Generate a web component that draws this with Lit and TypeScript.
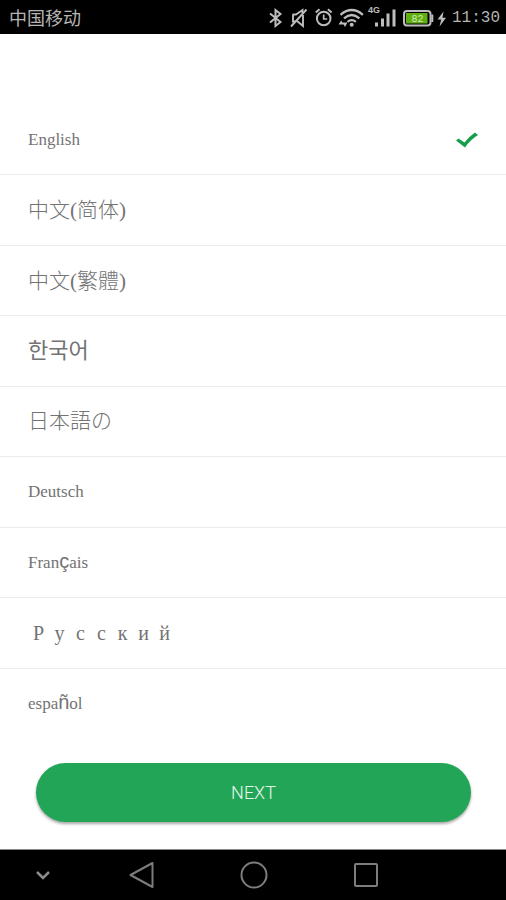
import { LitElement, html, css, svg, nothing } from "lit";
import { customElement, state } from "lit/decorators.js";

interface Language {
  code: string;
  style: "latin" | "cjk" | "hangul" | "wide";
  // Name split into runs; accented letters fall back to the sans face.
  runs: { text: string; fallback?: boolean }[];
}

const LANGUAGES: Language[] = [
  { code: "en", style: "latin", runs: [{ text: "English" }] },
  { code: "zh-Hans", style: "cjk", runs: [{ text: "中文(简体)" }] },
  { code: "zh-Hant", style: "cjk", runs: [{ text: "中文(繁體)" }] },
  { code: "ko", style: "hangul", runs: [{ text: "한국어" }] },
  { code: "ja", style: "cjk", runs: [{ text: "日本語の" }] },
  { code: "de", style: "latin", runs: [{ text: "Deutsch" }] },
  { code: "fr", style: "latin", runs: [{ text: "Fran" }, { text: "ç", fallback: true }, { text: "ais" }] },
  { code: "ru", style: "wide", runs: [..."Русский"].map((text) => ({ text })) },
  { code: "es", style: "latin", runs: [{ text: "espa" }, { text: "ñ", fallback: true }, { text: "ol" }] },
];

@customElement("status-bar")
export class StatusBar extends LitElement {
  static styles = css`
    :host {
      display: flex;
      align-items: center;
      gap: 5px;
      height: 34px;
      padding: 0 6px 0 9px;
      background: #000;
      color: #b4b4b4;
      box-sizing: border-box;
    }
    .carrier {
      flex: 1;
      font: 18px/20px "Noto Sans CJK SC", sans-serif;
    }
    .time {
      font: 16px/20px "Liberation Mono", monospace;
      padding-top: 2px;
    }
    svg {
      display: block;
      flex: none;
      overflow: visible;
      fill: none;
      stroke: #bdbdbd;
      stroke-width: 2;
    }
    .solid {
      fill: #bdbdbd;
      stroke: none;
    }
    .charge {
      fill: #5fae12;
      stroke: none;
    }
    .network {
      font: bold 9px "Liberation Sans", sans-serif;
      fill: #bdbdbd;
      stroke: none;
    }
    .level {
      font: 10px "Liberation Mono", monospace;
      fill: #d5e8b8;
      stroke: none;
      text-anchor: middle;
    }
  `;

  private icon(width: number, content: unknown) {
    return html`<svg width=${width} height="24" viewBox="0 0 ${width} 24" aria-hidden="true">${content}</svg>`;
  }

  render() {
    return html`
      <span class="carrier">中国移动</span>
      ${this.icon(16, svg`<path d="M2 8.500 12.500 17 7.500 21V5l5 4L2 17.500"/>`)}
      ${this.icon(19, svg`
        <path d="M3.500 9.500h3.500L13.500 5v3M14 10v11l-6-5M4 9.500v7h2" stroke-width="1.900"/>
        <path d="M2 21.500 17.500 4.500" stroke-width="1.900"/>`)}
      ${this.icon(21, svg`
        <circle cx="10.700" cy="13.500" r="6.800"/>
        <path d="M10.700 9.500v4.500h3.500" stroke-width="1.700"/>
        <path d="M2.800 7.500 6.500 4.300M18.600 7.500 14.900 4.300"/>`)}
      ${this.icon(25, svg`
        <path d="M1.500 9.800q11.200-9.600 22.400 0M5 13.300q7.700-6.600 15.400 0M8.500 16.800q4.200-3.400 8.400 0" stroke-width="2.200"/>
        <circle class="solid" cx="12.700" cy="19.800" r="2"/>
        <path class="solid" d="M-.5 19.500 2.200 15.500 4.700 19.500zM3.500 17.500h5L6 22z"/>`)}
      ${this.icon(29, svg`
        <text class="network" x="-1" y="8">4G</text>
        <path class="solid" d="M6 17.500h3v4H6zM12 13.500h3v8h-3zM17.500 8.500h3v13h-3zM23.500 4.500h3v17h-3z"/>`)}
      ${this.icon(31, svg`
        <rect x="1" y="6" width="26.500" height="14.500" rx="3"/>
        <path d="M29.300 9.500v7.500"/>
        <path class="charge" d="M3 8h21.500v10.500H3z"/>
        <text class="level" x="14.500" y="16.500">82</text>`)}
      ${this.icon(8, svg`<path class="solid" d="M4.500 6.500-1.500 14.500H2.200L.5 21.500 7 12.800H3.500z"/>`)}
      <span class="time">11:30</span>
    `;
  }
}

@customElement("nav-bar")
export class NavBar extends LitElement {
  static styles = css`
    :host {
      display: grid;
      grid-template-columns: 85fr 113fr 112fr 112fr 84fr;
      height: 51px;
      box-sizing: border-box;
      border-top: 1px solid #8a8a8a;
      background: #000;
    }
    button {
      display: grid;
      place-items: center;
      padding: 0;
      border: 0;
      background: none;
    }
    svg {
      display: block;
      fill: none;
      stroke: #7d7d7d;
      stroke-width: 2;
      stroke-linejoin: round;
    }
    .chevron {
      stroke: #8c8c8c;
      stroke-width: 2.500;
      stroke-linejoin: miter;
    }
  `;

  render() {
    return html`
      <button aria-label="Hide navigation">
        <svg width="28" height="28"><path class="chevron" d="M8 11l6 6 6-6"/></svg>
      </button>
      <button aria-label="Back">
        <svg width="28" height="28"><path d="M24.500 2v24L2.500 14z"/></svg>
      </button>
      <button aria-label="Home">
        <svg width="28" height="28"><circle cx="14" cy="14" r="12.500"/></svg>
      </button>
      <button aria-label="Recent apps">
        <svg width="28" height="28"><rect x="3" y="3" width="22" height="22" rx="1"/></svg>
      </button>
    `;
  }
}

@customElement("app-root")
export class AppRoot extends LitElement {
  static styles = css`
    :host {
      display: flex;
      flex-direction: column;
      min-height: 100vh;
      background: #fff;
    }
    form {
      flex: 1;
      display: flex;
      flex-direction: column;
    }
    .languages {
      flex: 1;
      display: flex;
      flex-direction: column;
      padding-top: 71px;
    }
    .language {
      box-sizing: border-box;
      flex: 1 0 48px;
      display: flex;
      align-items: center;
      padding: 0 28px;
      border-bottom: 1px solid #ebebeb;
      color: #737373;
      cursor: pointer;
    }
    .language:last-child {
      border-bottom-color: transparent;
    }
    .radio {
      appearance: none;
      width: 0;
      height: 0;
      margin: 0;
    }
    .name {
      flex: 1;
      line-height: 24px;
    }
    .latin {
      font-family: "Liberation Serif", serif;
      font-size: 17px;
    }
    .cjk {
      font-family: "Liberation Serif", "Noto Sans CJK SC", serif;
      font-size: 21px;
      font-weight: 300;
    }
    .hangul {
      font-family: "Liberation Serif", "Noto Sans CJK KR", sans-serif;
      font-size: 22px;
    }
    .wide {
      font-family: "Liberation Serif", serif;
      font-size: 20px;
    }
    .wide .run {
      display: inline-block;
      width: 21px;
      text-align: center;
    }
    .fallback {
      font-family: "Liberation Sans", sans-serif;
      font-size: 20px;
    }
    .check {
      display: block;
      fill: #169f4b;
    }
    .actions {
      padding: 24px 35px 27px 36px;
    }
    .next {
      display: block;
      width: 100%;
      height: 59px;
      border: 0;
      border-radius: 30px;
      background: #23a558;
      box-shadow: 0 2px 3px rgba(0, 0, 0, 0.35);
      color: #e6f7ec;
      font: 300 18px/24px Roboto, sans-serif;
    }
  `;

  @state() private selected = "en";

  private renderLanguage(lang: Language) {
    return html`
      <label class="language">
        <input
          class="radio"
          type="radio"
          name="language"
          .value=${lang.code}
          .checked=${lang.code === this.selected}
          @change=${() => (this.selected = lang.code)}
        />
        <span class="name ${lang.style}" lang=${lang.code}
          >${lang.runs.map((r) => html`<span class="run ${r.fallback ? "fallback" : ""}">${r.text}</span>`)}</span
        >
        ${lang.code === this.selected
          ? html`<svg class="check" width="22" height="16" viewBox="0 0 22 16" aria-hidden="true">
              <path d="M0 8.500 2.500 6.500 8.500 10.500Q13 4.500 19 .5L22 3Q14.500 7.500 9 15.500z" />
            </svg>`
          : nothing}
      </label>
    `;
  }

  render() {
    return html`
      <status-bar></status-bar>
      <form @submit=${(e: Event) => e.preventDefault()}>
        <div class="languages" role="radiogroup" aria-label="Language">
          ${LANGUAGES.map((l) => this.renderLanguage(l))}
        </div>
        <div class="actions"><button class="next" type="submit">NEXT</button></div>
      </form>
      <nav-bar></nav-bar>
    `;
  }
}
